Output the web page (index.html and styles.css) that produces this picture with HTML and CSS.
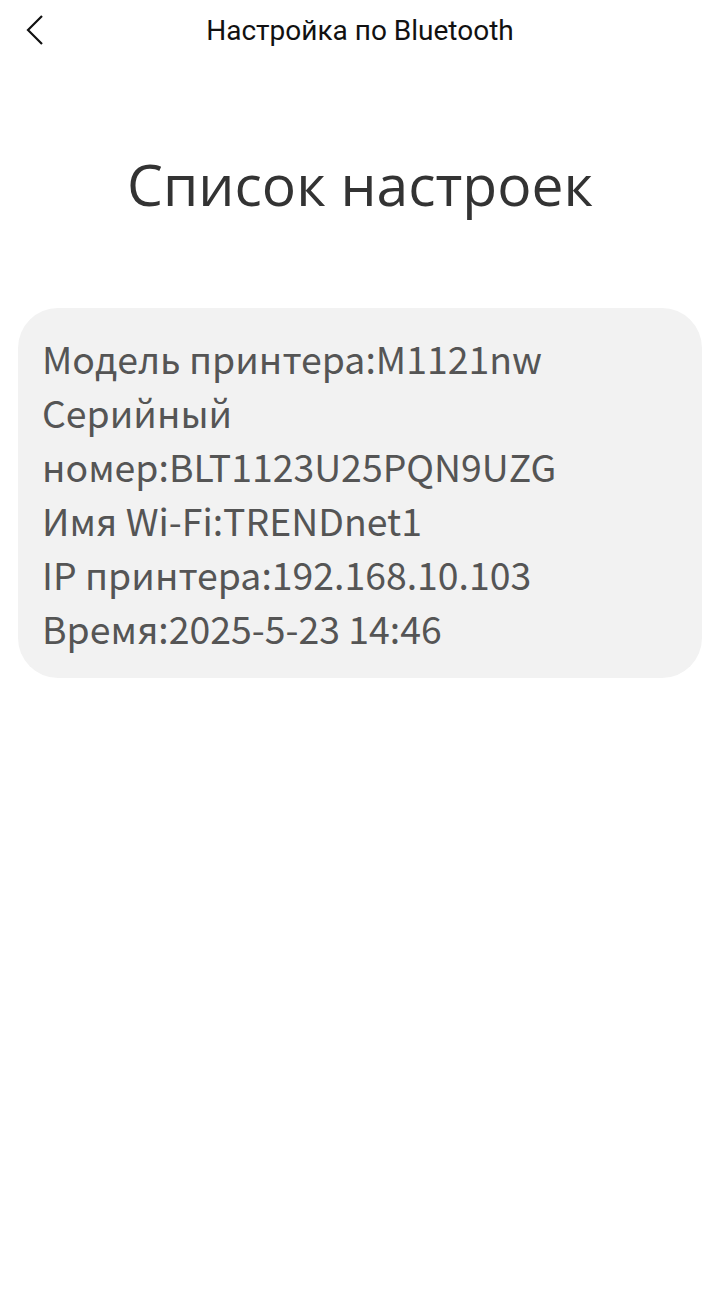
FILE: index.html
```html
<!DOCTYPE html>
<html lang="ru">
<head>
    <meta charset="UTF-8">
    <meta name="viewport" content="width=device-width, initial-scale=1.0">
    <title>Настройка по Bluetooth</title>
    <link rel="stylesheet" href="styles.css">
</head>
<body>
    <header class="topbar">
        <a class="back" href="#" aria-label="Назад">
            <svg width="20" height="32" viewBox="0 0 20 32">
                <path d="M17 2 L3 16 L17 30" fill="none" stroke="#111" stroke-width="2.2"/>
            </svg>
        </a>
        <h1>Настройка по Bluetooth</h1>
    </header>
    <main>
        <h2 class="title">Список настроек</h2>
        <div class="card">
            <p>Модель принтера:M1121nw</p>
            <p>Серийный номер:BLT1123U25PQN9UZG</p>
            <p>Имя Wi-Fi:TRENDnet1</p>
            <p>IP принтера:192.168.10.103</p>
            <p>Время:2025-5-23 14:46</p>
        </div>
    </main>
</body>
</html>
```

FILE: styles.css
```css
* {
    margin: 0;
    padding: 0;
    box-sizing: border-box;
}

body {
    font-family: Roboto, 'Noto Sans', sans-serif;
    background-color: #fff;
    color: #111;
    min-height: 100vh;
}

.topbar {
    position: relative;
    height: 60px;
    display: flex;
    align-items: center;
    justify-content: center;
}

.topbar h1 {
    font-size: 28px;
    font-weight: 400;
    color: #111;
}

.back {
    position: absolute;
    left: 25px;
    top: 14px;
    display: flex;
}

main {
    display: flex;
    flex-direction: column;
    align-items: center;
    padding: 0 18px;
}

.title {
    font-family: 'Open Sans', 'Noto Sans', sans-serif;
    font-size: 57px;
    font-weight: 400;
    color: #333;
    margin-top: 87px;
    line-height: 74px;
}

.card {
    width: 100%;
    margin-top: 87px;
    background-color: #f2f2f2;
    border-radius: 40px;
    padding: 23px 24px;
    font-family: 'Noto Sans CJK SC', 'Noto Sans', sans-serif;
    font-size: 37.4px;
    line-height: 54px;
    color: #555;
}
```
